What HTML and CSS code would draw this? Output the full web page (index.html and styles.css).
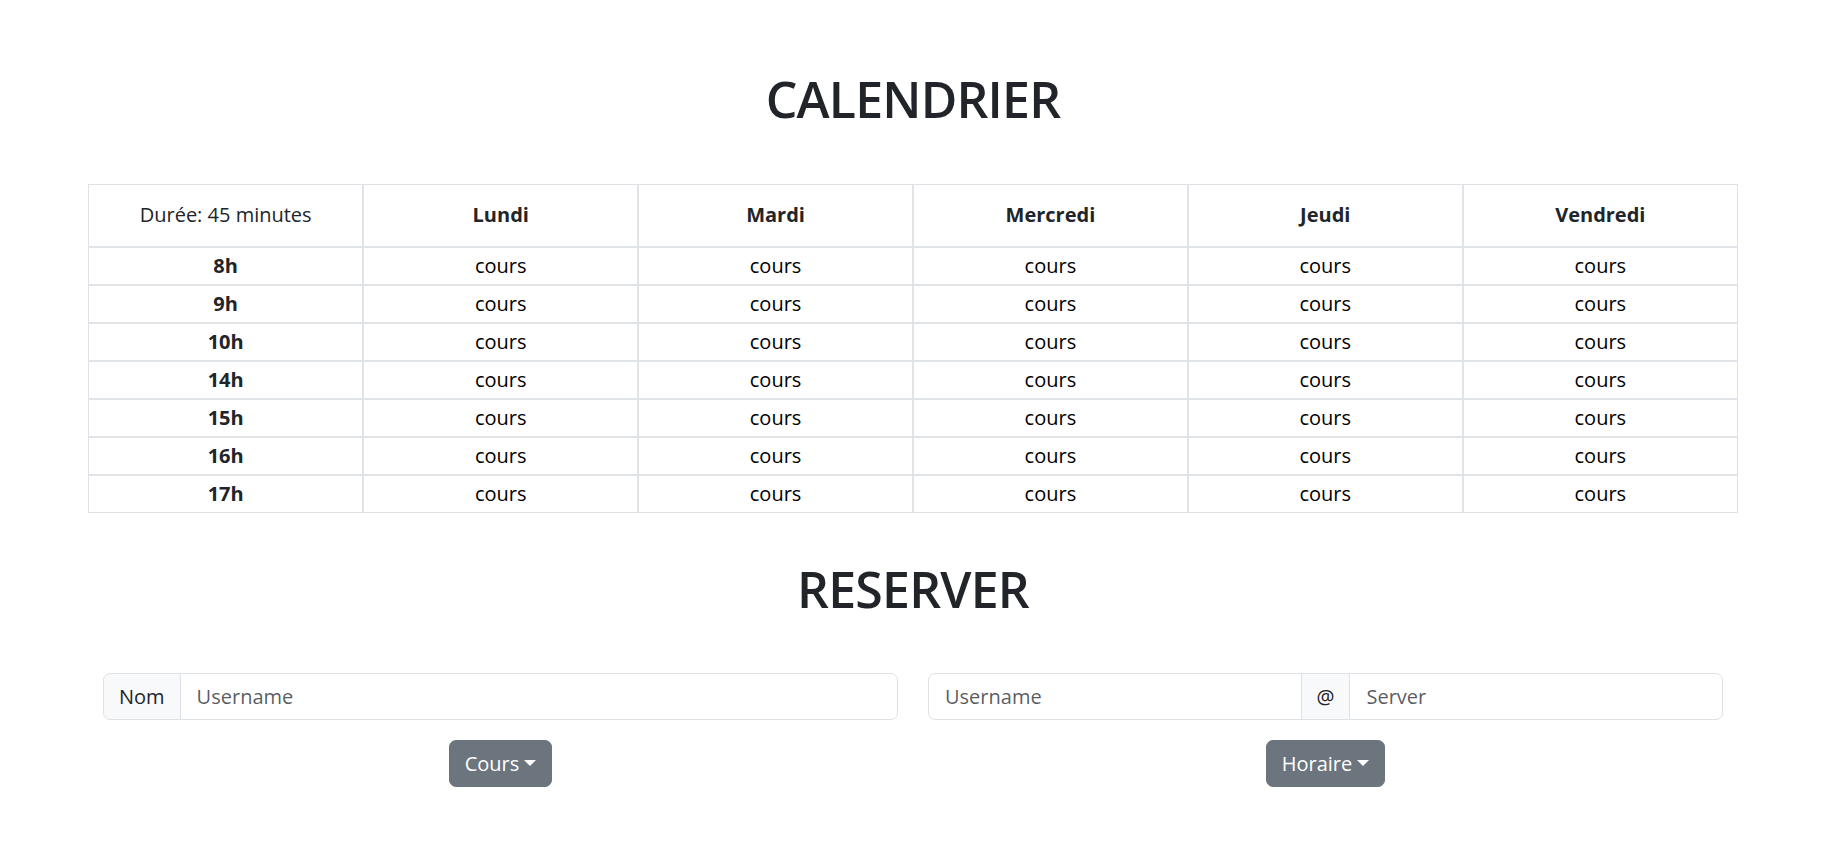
FILE: index.html
```html
<!DOCTYPE html>
<html lang="fr">
<head>
<meta charset="utf-8">
<title>Calendrier</title>
<link rel="stylesheet" href="styles.css">
</head>
<body>
<main class="page">
  <h1 class="title title-top">CALENDRIER</h1>
  <table class="schedule">
    <thead>
      <tr>
        <th class="duration">Durée: 45 minutes</th>
        <th>Lundi</th>
        <th>Mardi</th>
        <th>Mercredi</th>
        <th>Jeudi</th>
        <th>Vendredi</th>
      </tr>
    </thead>
    <tbody>
      <tr><th>8h</th><td>cours</td><td>cours</td><td>cours</td><td>cours</td><td>cours</td></tr>
      <tr><th>9h</th><td>cours</td><td>cours</td><td>cours</td><td>cours</td><td>cours</td></tr>
      <tr><th>10h</th><td>cours</td><td>cours</td><td>cours</td><td>cours</td><td>cours</td></tr>
      <tr><th>14h</th><td>cours</td><td>cours</td><td>cours</td><td>cours</td><td>cours</td></tr>
      <tr><th>15h</th><td>cours</td><td>cours</td><td>cours</td><td>cours</td><td>cours</td></tr>
      <tr><th>16h</th><td>cours</td><td>cours</td><td>cours</td><td>cours</td><td>cours</td></tr>
      <tr><th>17h</th><td>cours</td><td>cours</td><td>cours</td><td>cours</td><td>cours</td></tr>
    </tbody>
  </table>
  <h1 class="title title-bottom">RESERVER</h1>
  <div class="form-row">
    <div class="form-col">
      <div class="input-group">
        <span class="addon addon-first">Nom</span>
        <input class="field field-last" type="text" placeholder="Username">
      </div>
      <button class="btn dropdown-toggle" type="button">Cours</button>
    </div>
    <div class="form-col">
      <div class="input-group">
        <input class="field field-first" type="text" placeholder="Username">
        <span class="addon">@</span>
        <input class="field field-last" type="text" placeholder="Server">
      </div>
      <button class="btn dropdown-toggle" type="button">Horaire</button>
    </div>
  </div>
</main>
</body>
</html>
```
FILE: styles.css
```css
* { box-sizing: border-box; }
html, body { margin: 0; padding: 0; background: #fff; }
body {
  font-family: "Open Sans", "Noto Sans", sans-serif;
  font-size: 20px;
  line-height: 1.5;
  color: #212529;
}
.page {
  padding: 0 98px 0 88px;
}
.title {
  margin: 0;
  font-size: 50px;
  font-weight: 600;
  letter-spacing: -0.8px;
  line-height: 60px;
  text-align: center;
  color: #212529;
}
.title-top { padding-top: 69px; margin-bottom: 55px; }
.title-bottom { margin-top: 46px; margin-bottom: 54px; }

.schedule {
  width: 100%;
  border-collapse: collapse;
  table-layout: fixed;
}
.schedule th, .schedule td {
  border: 2px solid #e0e3e7;
  text-align: center;
  padding: 0;
  font-size: 20px;
}
.schedule tr > :first-child { border-left: 1px solid #dee2e6; }
.schedule tr > :last-child { border-right: 1px solid #dee2e6; }
.schedule thead th { border-top: 1px solid #dee2e6; }
.schedule tbody tr:last-child > * { border-bottom: 1px solid #dee2e6; }
.schedule thead th {
  height: 62px;
  font-weight: 700;
}
.schedule thead th.duration { font-weight: 400; }
.schedule tbody th, .schedule tbody td { height: 38px; }
.schedule tbody th { font-weight: 700; }
.schedule td { color: #000; }

.form-row {
  display: flex;
}
.form-col {
  flex: 1 1 0;
  padding: 0 15px;
  display: flex;
  flex-direction: column;
  align-items: center;
  gap: 20px;
}
.input-group {
  display: flex;
  width: 100%;
  height: 47px;
}
.addon {
  display: flex;
  align-items: center;
  padding: 0 15px;
  background: #f8f9fa;
  border: 1px solid #dee2e6;
  color: #212529;
  font-size: 20px;
}
.addon-first { border-radius: 7px 0 0 7px; }
.field {
  flex: 1 1 0;
  min-width: 0;
  border: 1px solid #dee2e6;
  padding: 0 16px;
  font-family: inherit;
  font-size: 20px;
  color: #212529;
  background: #fff;
  outline: none;
}
.field-first { border-radius: 7px 0 0 7px; }
.field-last { border-radius: 0 7px 7px 0; }
.addon + .field { margin-left: -1px; }
.field + .addon { margin-left: -1px; }
.field::placeholder { color: rgba(33, 37, 41, 0.75); }

.btn {
  height: 47px;
  padding: 0 15px;
  border: 1px solid #6c757d;
  border-radius: 7px;
  background: #6c757d;
  color: #fff;
  font-family: inherit;
  font-size: 20px;
  line-height: 1.5;
  cursor: pointer;
}
.dropdown-toggle::after {
  content: "";
  display: inline-block;
  margin-left: 5px;
  vertical-align: 5px;
  border-top: 6px solid #fff;
  border-right: 6px solid transparent;
  border-left: 6px solid transparent;
  border-bottom: 0;
}
```
